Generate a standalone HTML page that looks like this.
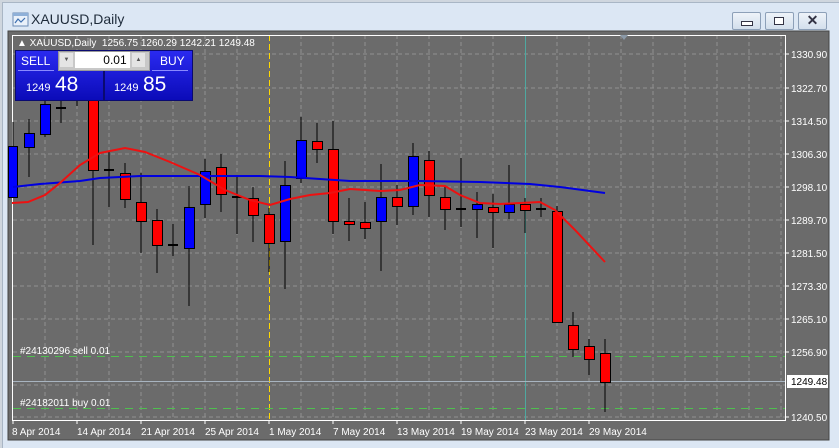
<!DOCTYPE html>
<html><head><meta charset="utf-8"><style>
html,body{margin:0;padding:0;width:839px;height:447px;overflow:hidden;background:#cfd6de;font-family:"Liberation Sans",sans-serif}
#win{position:absolute;left:2px;top:2px;width:837px;height:445px;background:#dce7f4;border-left:1px solid #a9b6c5;border-top:1px solid #a9b6c5}
.btn{position:absolute;top:9px;width:27px;height:16px;border:1px solid #8da0b8;border-radius:2px;background:linear-gradient(#eef3f9,#d3dfec)}
.panel{position:absolute;background:linear-gradient(#2a2af0,#0b0bb8);border:1px solid #0a0a70;color:#fff}
</style></head><body>
<div id="win">
<svg style="position:absolute;left:9px;top:9px" width="18" height="16" viewBox="0 0 18 16"><rect x="1" y="1" width="15" height="13" fill="#eaf1fa" stroke="#6b8bb5"/><rect x="1" y="1" width="15" height="3" fill="#8fb0d8"/><path d="M3 11 L6 7 L9 10 L13 6" stroke="#3d6fb0" fill="none" stroke-width="1.2"/></svg>
<div style="position:absolute;left:28px;top:8px;font-size:14px;color:#1e2b3a">XAUUSD,Daily</div>
<div class="btn" style="left:729px"><div style="position:absolute;left:8px;top:8px;width:10px;height:3px;border:1px solid #334;background:#fff"></div></div>
<div class="btn" style="left:762px"><div style="position:absolute;left:8px;top:4px;width:8px;height:6px;border:1px solid #334;background:#fff"></div></div>
<div class="btn" style="left:795px"><div style="position:absolute;left:0;top:-1px;width:27px;text-align:center;font-size:14px;font-weight:bold;color:#334">✕</div></div>
</div>
<svg style="position:absolute;left:0;top:0" width="839" height="447" font-family="Liberation Sans, sans-serif">
<defs><pattern id="yd" x="0" y="35" width="1" height="9" patternUnits="userSpaceOnUse"><rect width="1" height="6" fill="#ffd800"/></pattern></defs>
<rect x="8" y="31" width="821" height="409" fill="#6b6b6b" stroke="#444" stroke-width="1"/>
<g stroke="#909090" stroke-dasharray="4,3" stroke-width="1">
<path d="M13 54H785M13 88H785M13 121H785M13 154H785M13 187H785M13 220H785M13 253H785M13 286H785M13 319H785M13 352H785M13 385H785M13 417H785"/>
<path d="M45 35V420M77 35V420M109 35V420M141 35V420M173 35V420M205 35V420M237 35V420M301 35V420M333 35V420M365 35V420M397 35V420M429 35V420M461 35V420M493 35V420M557 35V420M589 35V420M621 35V420M653 35V420M685 35V420M717 35V420M749 35V420M781 35V420"/>
</g>
<rect x="269" y="35" width="1" height="385" fill="url(#yd)"/>
<rect x="525" y="35" width="1" height="385" fill="#4fa8a0"/>
<path d="M13 381.5H785" stroke="#a8b4c0"/>
<path d="M13 356.5H785M13 408.5H785" stroke="#4fc04f" stroke-dasharray="8,6"/>
<rect x="12.5" y="35.5" width="773" height="385" fill="none" stroke="#fff"/>
<path d="M620 35 L628 35 L624 40 Z" fill="#8a98a6"/>
<g stroke="#000" stroke-width="1">
<path d="M13 122V197M29 119V177M45 85V137M61 100V123M77 92V106M93 100V245M109 151V207M125 163V208M141 173V253M157 209V273M173 224V256M189 186V306M205 159V218M221 154V212M237 175V234M253 187V242M269 208V272M285 161V289M301 117V183M317 123V163M333 121V234M349 198V241M365 202V239M381 164V271M397 185V225M413 143V215M429 151V217M445 187V230M461 158V227M477 192V238M493 194V248M509 165V219M525 198V233M541 198V217M557 206V323M573 312V357M589 339V375M605 339V412"/>
<path d="M56 108H66M104 170H114M168 245H178M232 197H242M456 209H466M536 209H546" stroke-width="2"/>
</g>
<g stroke="#000" stroke-width="1" fill="#0000ff">
<rect x="8.5" y="146.5" width="9" height="51"/><rect x="24.5" y="133.5" width="10" height="14"/><rect x="40.5" y="104.5" width="10" height="30"/><rect x="184.5" y="207.5" width="10" height="41"/><rect x="200.5" y="171.5" width="10" height="33"/><rect x="280.5" y="185.5" width="10" height="56"/><rect x="296.5" y="140.5" width="10" height="38"/><rect x="376.5" y="197.5" width="10" height="24"/><rect x="408.5" y="156.5" width="10" height="50"/><rect x="472.5" y="204.5" width="10" height="5"/><rect x="504.5" y="204.5" width="10" height="8"/>
</g>
<g stroke="#000" stroke-width="1" fill="#ff0000">
<rect x="88.5" y="98.5" width="10" height="72"/><rect x="120.5" y="173.5" width="10" height="26"/><rect x="136.5" y="202.5" width="10" height="19"/><rect x="152.5" y="220.5" width="10" height="25"/><rect x="216.5" y="167.5" width="10" height="27"/><rect x="248.5" y="198.5" width="10" height="17"/><rect x="264.5" y="214.5" width="10" height="29"/><rect x="312.5" y="141.5" width="10" height="8"/><rect x="328.5" y="149.5" width="10" height="72"/><rect x="344.5" y="221.5" width="10" height="3"/><rect x="360.5" y="222.5" width="10" height="6"/><rect x="392.5" y="197.5" width="10" height="9"/><rect x="424.5" y="160.5" width="10" height="35"/><rect x="440.5" y="197.5" width="10" height="12"/><rect x="488.5" y="207.5" width="10" height="5"/><rect x="520.5" y="204.5" width="10" height="6"/><rect x="552.5" y="211.5" width="10" height="111"/><rect x="568.5" y="325.5" width="10" height="24"/><rect x="584.5" y="346.5" width="10" height="13"/><rect x="600.5" y="353.5" width="10" height="29"/>
</g>
<polyline fill="none" stroke="#0000e0" stroke-width="2" points="13,187 40,184 80,181 100,178 140,176 200,176 260,176 290,177 350,181 420,181 480,182 530,184 560,187 590,191 605,193"/>
<polyline fill="none" stroke="#ee1111" stroke-width="2" points="12,203 28,202 45,195 60,183 80,165 100,153 125,148 145,152 170,162 200,175 225,190 250,200 270,205 290,199 310,195 330,193 350,189 380,191 400,190 420,185 445,186 460,195 480,203 500,204 540,202 555,210 575,230 605,262"/>
<g fill="#fff" font-size="10">
<text x="17" y="46">▲ XAUUSD,Daily&#160;&#160;1256.75 1260.29 1242.21 1249.48</text>
<text x="20" y="354">#24130296 sell 0.01</text>
<text x="20" y="406">#24182011 buy 0.01</text>
</g>
<g fill="#fff" font-size="10">
<text x="791" y="58">1330.90</text><text x="791" y="92">1322.70</text><text x="791" y="125">1314.50</text><text x="791" y="158">1306.30</text><text x="791" y="191">1298.10</text><text x="791" y="224">1289.70</text><text x="791" y="257">1281.50</text><text x="791" y="290">1273.30</text><text x="791" y="323">1265.10</text><text x="791" y="356">1256.90</text><text x="791" y="421">1240.50</text>
</g>
<rect x="787" y="375" width="41" height="13" fill="#fff"/>
<text x="791" y="385" font-size="10" fill="#000">1249.48</text>
<g stroke="#fff"><path d="M786 54h3M786 88h3M786 121h3M786 154h3M786 187h3M786 220h3M786 253h3M786 286h3M786 319h3M786 352h3M786 417h3M13 420v4M77 420v4M141 420v4M205 420v4M269 420v4M333 420v4M397 420v4M461 420v4M525 420v4M589 420v4"/></g>
<g fill="#fff" font-size="10">
<text x="12" y="435">8 Apr 2014</text><text x="77" y="435">14 Apr 2014</text><text x="141" y="435">21 Apr 2014</text><text x="205" y="435">25 Apr 2014</text><text x="269" y="435">1 May 2014</text><text x="333" y="435">7 May 2014</text><text x="397" y="435">13 May 2014</text><text x="461" y="435">19 May 2014</text><text x="525" y="435">23 May 2014</text><text x="589" y="435">29 May 2014</text>
</g>
</svg>
<div class="panel" style="left:15px;top:50px;width:87px;height:49px"></div>
<div class="panel" style="left:104px;top:50px;width:87px;height:49px"></div>
<div style="position:absolute;left:21px;top:54px;color:#fff;font-size:12px">SELL</div>
<div style="position:absolute;left:18px;top:70px;width:36px;height:1px;background:#8a8aff"></div>
<div style="position:absolute;left:160px;top:54px;color:#fff;font-size:12px">BUY</div>
<div style="position:absolute;left:152px;top:70px;width:36px;height:1px;background:#8a8aff"></div>
<div style="position:absolute;left:58px;top:51px;width:90px;height:18px;background:#c8c8c8;border:1px solid #999"></div>
<div style="position:absolute;left:60px;top:53px;width:13px;height:14px;background:#e4e4e4;font-size:6px;color:#555;text-align:center;line-height:14px">▼</div>
<div style="position:absolute;left:75px;top:52px;width:55px;height:16px;background:#fff;font-size:12px;text-align:right;line-height:16px;color:#000">0.01&#160;</div>
<div style="position:absolute;left:132px;top:53px;width:13px;height:14px;background:#e4e4e4;font-size:6px;color:#555;text-align:center;line-height:14px">▲</div>
<div style="position:absolute;left:26px;top:73px;color:#fff;white-space:nowrap"><span style="font-size:11px">1249</span> <span style="font-size:21px">48</span></div>
<div style="position:absolute;left:114px;top:73px;color:#fff;white-space:nowrap"><span style="font-size:11px">1249</span> <span style="font-size:21px">85</span></div>
</body></html>
